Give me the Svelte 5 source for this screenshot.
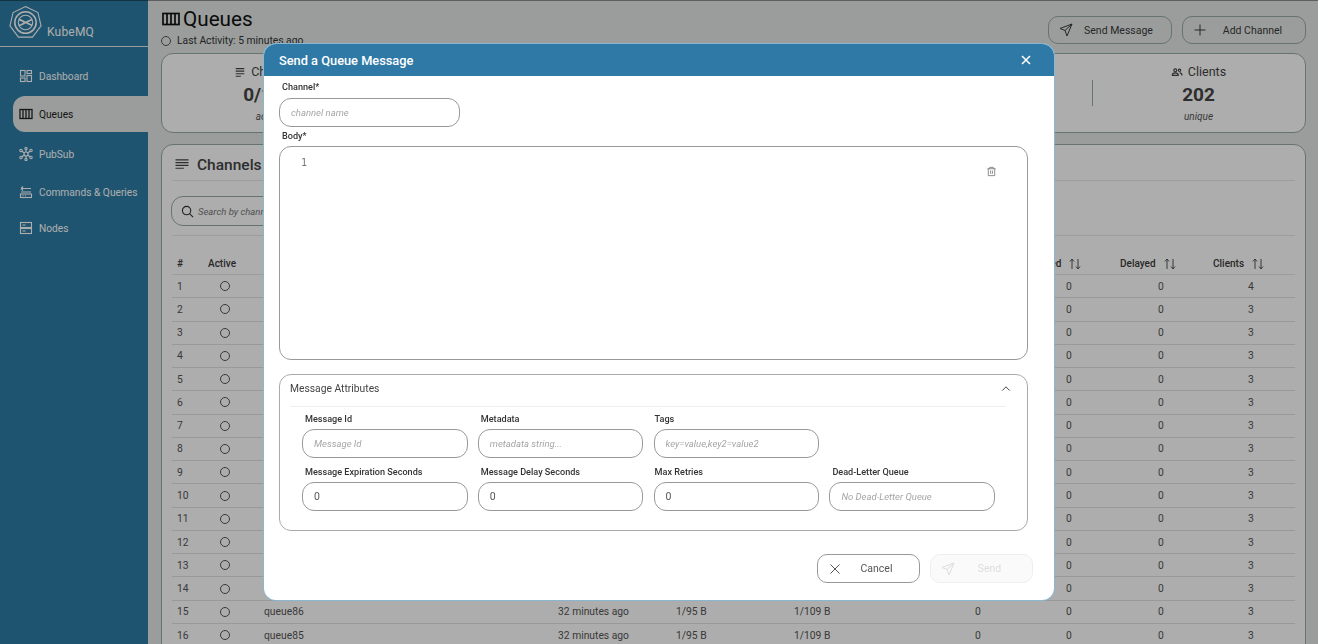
<script>
  const nav = ['Dashboard', 'Queues', 'PubSub', 'Commands & Queries', 'Nodes'];
  const stats = [
    { t: 'Channels', v: '0/104', s: 'active' },
    { t: 'Sent', v: '104', s: 'messages' },
    { t: 'Delivered', v: '104', s: 'messages' },
    { t: 'Waiting', v: '0', s: 'messages' },
    { t: 'Clients', v: '202', s: 'unique' }
  ];
  const rows = Array.from({ length: 16 }, (_, i) => ({
    n: i + 1,
    name: 'queue' + (100 - i),
    clients: i === 0 ? 4 : 3
  }));
  const heads = ['Waiting', 'Expired', 'Delayed', 'Clients'];
</script>

<div class="page">
  <aside class="side">
    <div class="brand">
      <svg class="logo" viewBox="0 0 36 36" fill="none" stroke="#fff" stroke-width="1.1">
        <path d="M18 1 30.800 7.200 34 21 25.200 32.500 10.800 32.500 2 21 5.200 7.200Z" />
        <circle cx="18" cy="17.500" r="11" stroke-width="1.600" />
        <circle cx="18" cy="17.500" r="7.400" />
        <path d="M11 14.500c3 0 4.500 2 7 3s4.500 2 7 3M11 20.500c3 0 4.500-2 7-3s4.500-2 7-3" stroke-width="1.700" />
      </svg>
      <span>KubeMQ</span>
    </div>
    <nav>
      {#each nav as item, i}
        <div class="nav" class:active={i === 1}>
          <svg viewBox="0 0 14 14" fill="none" stroke="currentColor" stroke-width="1.100">
            {#if i === 0}
              <rect x="1.500" y="1.500" width="4.500" height="5.500" /><rect x="8" y="1.500" width="4.500" height="3" /><rect x="1.500" y="9" width="4.500" height="3.500" /><rect x="8" y="6.500" width="4.500" height="6" />
            {:else if i === 1}
              <rect x="1" y="2.500" width="12" height="9" stroke-width="1.300" /><path d="M4 2.500v9M7 2.500v9M10 2.500v9" stroke-width="1.300" />
            {:else if i === 2}
              <circle cx="7" cy="7" r="2" /><circle cx="2" cy="3.500" r="1.200" /><circle cx="12" cy="3.500" r="1.200" /><circle cx="2" cy="10.500" r="1.200" /><circle cx="12" cy="10.500" r="1.200" /><circle cx="7" cy="1.500" r="1.100" /><circle cx="7" cy="12.500" r="1.100" /><path d="M3 4.200 5.300 6M11 4.200 8.700 6M3 9.800 5.300 8M11 9.800 8.700 8M7 2.600V5M7 9v2.400" />
            {:else if i === 3}
              <path d="M2 3.500h10M2 3.500 4 1.500M2 3.500l2 2M12 7H2" /><rect x="1.500" y="9" width="11" height="3.500" /><path d="M3.500 10.800h1M6 10.800h1" />
            {:else}
              <rect x="1.500" y="1.500" width="11" height="5" /><rect x="1.500" y="7.500" width="11" height="5" /><path d="M3.500 4h3M3.500 10h3" />
            {/if}
          </svg>
          <span>{item}</span>
        </div>
      {/each}
    </nav>
  </aside>

  <main>
    <header>
      <div>
        <h1>
          <svg viewBox="0 0 18 14" fill="none" stroke="#111" stroke-width="1.700"><rect x="1" y="1.500" width="16" height="11" /><path d="M5 1.500v11M9 1.500v11M13 1.500v11" /></svg>
          Queues
        </h1>
        <div class="activity"><i class="dot"></i>Last Activity: 5 minutes ago</div>
      </div>
      <div class="actions">
        <button class="btn top">
          <svg viewBox="0 0 14 14" fill="none" stroke="currentColor" stroke-width="1"><path d="M13 1 1 5.500l5 2 2 5.500zM13 1 6 7.500" /></svg>
          <span>Send Message</span>
        </button>
        <button class="btn top">
          <svg viewBox="0 0 14 14" fill="none" stroke="currentColor" stroke-width="1"><path d="M7 1.500v11M1.500 7h11" /></svg>
          <span>Add Channel</span>
        </button>
      </div>
    </header>

    <section class="stats">
      {#each stats as s, i}
        <div class="stat" class:sep={i > 0}>
          <div class="st">
            <svg viewBox="0 0 14 14" fill="none" stroke="currentColor" stroke-width="1.300">
              {#if i === 4}
                <circle cx="5" cy="5" r="1.700" /><circle cx="10" cy="5" r="1.400" /><path d="M1.500 11c0-2 1.500-3 3.500-3s3.500 1 3.500 3zM10 8c1.500 0 2.800.8 2.800 3" />
              {:else}
                <path d="M2 3h10M2 6h10M2 9h10M2 12h6" />
              {/if}
            </svg>
            {s.t}
          </div>
          <div class="sv">{s.v}</div>
          <div class="ss">{s.s}</div>
        </div>
      {/each}
    </section>

    <section class="panel">
      <h2>
        <svg viewBox="0 0 14 14" fill="none" stroke="#444" stroke-width="1.200"><path d="M0 2h14M0 5h14M0 8h14M0 11h9" /></svg>
        Channels
      </h2>
      <div class="searchrow">
        <div class="search">
          <svg viewBox="0 0 14 14" fill="none" stroke="#333" stroke-width="1.200"><circle cx="6" cy="6" r="4.500" /><path d="m9.500 9.500 3.500 3.500" /></svg>
          <em>Search by channel name</em>
        </div>
      </div>
      <div class="thead">
        <span>#</span><span>Active</span><span>Name</span><span>Last Activity</span><span>Sent</span><span>Delivered</span>
        {#each heads as h}
          <span class="th">{h}<svg viewBox="0 0 14 12" fill="none" stroke="#555" stroke-width="1"><path d="M4 11V1M4 1 2 3.500M4 1l2 2.500M10 1v10M10 11 8 8.500M10 11l2-2.500" /></svg></span>
        {/each}
      </div>
      {#each rows as r}
        <div class="row">
          <span>{r.n}</span><span><i class="dot"></i></span><span>{r.name}</span><span>32 minutes ago</span><span>1/95 B</span><span>1/109 B</span><span>0</span><span>0</span><span>0</span><span>{r.clients}</span>
        </div>
      {/each}
    </section>
  </main>

  <div class="backdrop">
    <div class="modal">
      <div class="mhead">
        <span>Send a Queue Message</span>
        <svg viewBox="0 0 12 12" fill="none" stroke="#fff" stroke-width="1.600"><path d="M2 2l8 8M10 2l-8 8" /></svg>
      </div>
      <div class="mbody">
        <label for="ch">Channel*</label>
        <input id="ch" class="field chan" placeholder="channel name" />
        <div class="lbl body">Body*</div>
        <div class="editor">
          <span class="ln">1</span>
          <svg viewBox="0 0 12 12" fill="none" stroke="#666" stroke-width=".8"><path d="M1.500 3h9M4 3V1.500h4V3M2.500 3v7.500h7V3M5 5v3.500M7 5v3.500" /></svg>
        </div>
        <div class="attrs">
          <div class="ahead">
            <span>Message Attributes</span>
            <svg viewBox="0 0 12 8" fill="none" stroke="#333" stroke-width="1.100"><path d="M1.500 6.500 6 2l4.500 4.500" /></svg>
          </div>
          <div class="grid">
            <div class="f"><div class="lbl">Message Id</div><input class="field" placeholder="Message Id" /></div>
            <div class="f"><div class="lbl">Metadata</div><input class="field" placeholder="metadata string..." /></div>
            <div class="f"><div class="lbl">Tags</div><input class="field" placeholder="key=value,key2=value2" /></div>
            <div></div>
            <div class="f"><div class="lbl">Message Expiration Seconds</div><input class="field" value="0" /></div>
            <div class="f"><div class="lbl">Message Delay Seconds</div><input class="field" value="0" /></div>
            <div class="f"><div class="lbl">Max Retries</div><input class="field" value="0" /></div>
            <div class="f"><div class="lbl">Dead-Letter Queue</div><input class="field" placeholder="No Dead-Letter Queue" /></div>
          </div>
        </div>
        <div class="foot">
          <button class="btn cancel">
            <svg viewBox="0 0 14 14" fill="none" stroke="currentColor" stroke-width="1"><path d="M2.500 2.500l9 9M11.500 2.500l-9 9" /></svg>
            <span>Cancel</span>
          </button>
          <button class="btn send" disabled>
            <svg viewBox="0 0 14 14" fill="none" stroke="currentColor" stroke-width="1"><path d="M13 1 1 5.500l5 2 2 5.500zM13 1 6 7.500" /></svg>
            <span>Send</span>
          </button>
        </div>
      </div>
    </div>
  </div>
</div>

<style>
  :global(body) { margin: 0; }
  * { box-sizing: border-box; }
  .page {
    width: 1318px; height: 644px; overflow: hidden; display: flex;
    font-family: Roboto, "Liberation Sans", sans-serif; color: #3a3a3a;
    background: #e3e8e6;
  }
  .side { width: 148px; flex: none; background: #2e7da6; color: #fff; }
  .brand { height: 47px; border-bottom: 1px solid #dfe6e4; display: flex; padding: 5px 0 0 8px; font-size: 12px; }
  .logo { width: 35px; height: 36px; }
  .brand span { margin: 20px 0 0 4px; line-height: 14px; letter-spacing: .2px; }
  nav { padding: 11px 0 0 13px; }
  .nav { height: 36px; display: flex; align-items: center; gap: 6px; padding-left: 6px; font-size: 10.200px; }
  .nav:nth-child(1) { margin-bottom: 2px; }
  .nav:nth-child(2) { margin-bottom: 4px; }
  .nav:nth-child(3) { margin-bottom: 2px; }
  .nav svg { width: 14px; height: 14px; flex: none; }
  .nav span { position: relative; top: .5px; }
  .active { background: #e3e8e6; color: #222; border-radius: 12px 0 0 12px; }

  main { flex: 1; min-width: 0; padding: 0 12px 0 13px; }
  header { height: 53px; display: flex; justify-content: space-between; }
  h1 { margin: 6px 0 0; font-size: 20.700px; font-weight: 400; line-height: 26px; color: #111; display: flex; align-items: center; gap: 3px; }
  h1 svg { width: 18px; height: 14px; margin-left: 1px; }
  .activity { font-size: 10.300px; line-height: 14px; display: flex; align-items: center; gap: 6px; margin-top: 2px; color: #333; }
  .dot { display: inline-block; width: 10px; height: 10px; border: 1px solid #555; border-radius: 50%; flex: none; }
  .actions { display: flex; gap: 10px; padding-top: 16px; }
  .btn {
    width: 124px; height: 28px; border: 1px solid #97aba3; border-radius: 10px; background: transparent;
    display: flex; align-items: center; padding: 0 0 0 10px; font: 400 10.500px Roboto, "Liberation Sans", sans-serif; color: #3a3a3a;
  }
  .btn svg { width: 14px; height: 14px; flex: none; }
  .btn span { flex: 1; text-align: center; padding-right: 7px; }

  .stats { height: 80px; display: flex; justify-content: space-between; border: 1px solid #97aba3; border-radius: 12px; background: #fff; }
  .stat { width: 213px; height: 100%; text-align: center; padding-top: 10px; position: relative; }
  .sep::before { content: ""; position: absolute; left: 0; top: 26px; height: 26px; border-left: 1px solid #97aba3; }
  .st { font-size: 12.500px; line-height: 16px; display: flex; justify-content: center; align-items: center; gap: 5px; color: #444; }
  .st svg { width: 12px; height: 12px; }
  .sv { font-size: 19px; font-weight: 700; line-height: 24px; margin-top: 3px; color: #444; }
  .ss { font-size: 10px; font-style: italic; line-height: 13px; margin-top: 3px; color: #555; }

  .panel { margin-top: 11px; height: 520px; border: 1px solid #97aba3; border-radius: 12px; background: #fff; padding: 0 10px; }
  h2 { margin: 0; height: 36px; font-size: 15.500px; font-weight: 500; color: #444; display: flex; align-items: center; gap: 8px; padding: 4px 0 0 3px; border-bottom: 1px solid #e6e6e6; }
  h2 svg { width: 14px; height: 13px; }
  .searchrow { height: 55px; padding-top: 15px; border-bottom: 1px solid #e6e6e6; }
  .search { width: 300px; height: 30px; margin-left: -1px; border: 1px solid #97aba3; border-radius: 12px; display: flex; align-items: center; gap: 4px; padding-left: 9px; font-size: 9.500px; color: #777; }
  .search svg { width: 13px; height: 13px; }
  .thead, .row { display: grid; align-items: center; font-size: 10.300px; }
  .thead {
    grid-template-columns: 36px 56px 294px 118px 118px 142px 92px 92px 93px 82px;
    height: 39px; padding-top: 17px; font-weight: 500; color: #3a3a3a; font-size: 10px;
    border-bottom: 1px solid #e6e6e6;
  }
  .thead > span:first-child, .row > span:first-child { padding-left: 5px; }
  .th { display: flex; align-items: center; gap: 7px; }
  .th svg { width: 14px; height: 12px; }
  .row {
    grid-template-columns: 36px 56px 294px 118px 118px 181px 91px 92px 90px 47px;
    height: 23.270px; border-bottom: 1px solid #e2e2e2; color: #555;
  }
  .row span { display: flex; align-items: center; }
  .row .dot { margin-left: 12px; }

  .backdrop { position: fixed; inset: 0; background: rgba(0, 0, 0, .32); box-shadow: inset 0 1px 0 rgba(0, 0, 0, .4); display: flex; align-items: center; justify-content: center; }
  .modal { width: 790px; height: 556px; background: #fff; border-radius: 12px; box-shadow: 0 0 0 1px #8ab6cf; overflow: hidden; display: flex; flex-direction: column; }
  .mhead { height: 32px; flex: none; background: #2e79a6; color: #fff; display: flex; align-items: center; justify-content: space-between; padding: 0 22px 0 15px; font-size: 12.800px; font-weight: 500; }
  .mhead svg { width: 12px; height: 12px; }
  .mbody { flex: 1; padding: 5px 26px 0 15px; display: flex; flex-direction: column; align-items: flex-start; }
  label, .lbl { display: block; font-size: 9.100px; font-weight: 500; line-height: 12px; color: #333; margin-left: 3px; }
  .field {
    display: block; height: 29px; width: 100%; border: 1px solid #999; border-radius: 12px; background: #fff; outline: none;
    padding: 0 11px; font: 400 10.500px Roboto, "Liberation Sans", sans-serif; color: #555;
  }
  .field::placeholder { font-style: italic; font-size: 9.500px; color: #a5a5a5; opacity: 1; }
  .chan { width: 181px; margin-top: 5px; }
  .body { margin-top: 1px; height: 17px; padding-top: 2px; }
  .editor { width: 749px; height: 214px; margin-top: 1px; border: 1px solid #999; border-radius: 12px; display: flex; justify-content: space-between; padding: 9px 30px 0 21px; }
  .ln { font: 400 10px "DejaVu Sans Mono", monospace; line-height: 13px; color: #777; }
  .editor svg { width: 11px; height: 11px; margin-top: 10px; }
  .attrs { width: 749px; height: 157.500px; margin-top: 13.500px; border: 1px solid #aaa; border-radius: 12px; padding: 0 12px; }
  .ahead { height: 32.500px; margin: 0 9px 0 -2px; padding-bottom: 3px; border-bottom: 1px solid #eee; display: flex; align-items: center; justify-content: space-between; font-size: 10.300px; color: #444; }
  .ahead svg { width: 10px; height: 7px; margin-right: -5px; }
  .grid { display: grid; grid-template-columns: repeat(4, 165.500px); column-gap: 10.300px; margin: 6px 0 0 10px; row-gap: 8px; }
  .f .lbl { height: 16px; }
  .f:nth-child(3) .lbl, .f:nth-child(7) .lbl { margin-left: 1px; }
  .foot { width: 100%; margin-top: 23px; display: flex; justify-content: flex-end; gap: 10px; padding-left: 5px; position: relative; left: 5px; }
  .cancel, .send { width: 103px; height: 29px; }
  .cancel { border-color: #999; color: #555; background: #fff; }
  .send { border-color: #eee; background: #fafafa; color: #ddd; }
  .cancel span, .send span { padding-right: 8px; }
</style>
